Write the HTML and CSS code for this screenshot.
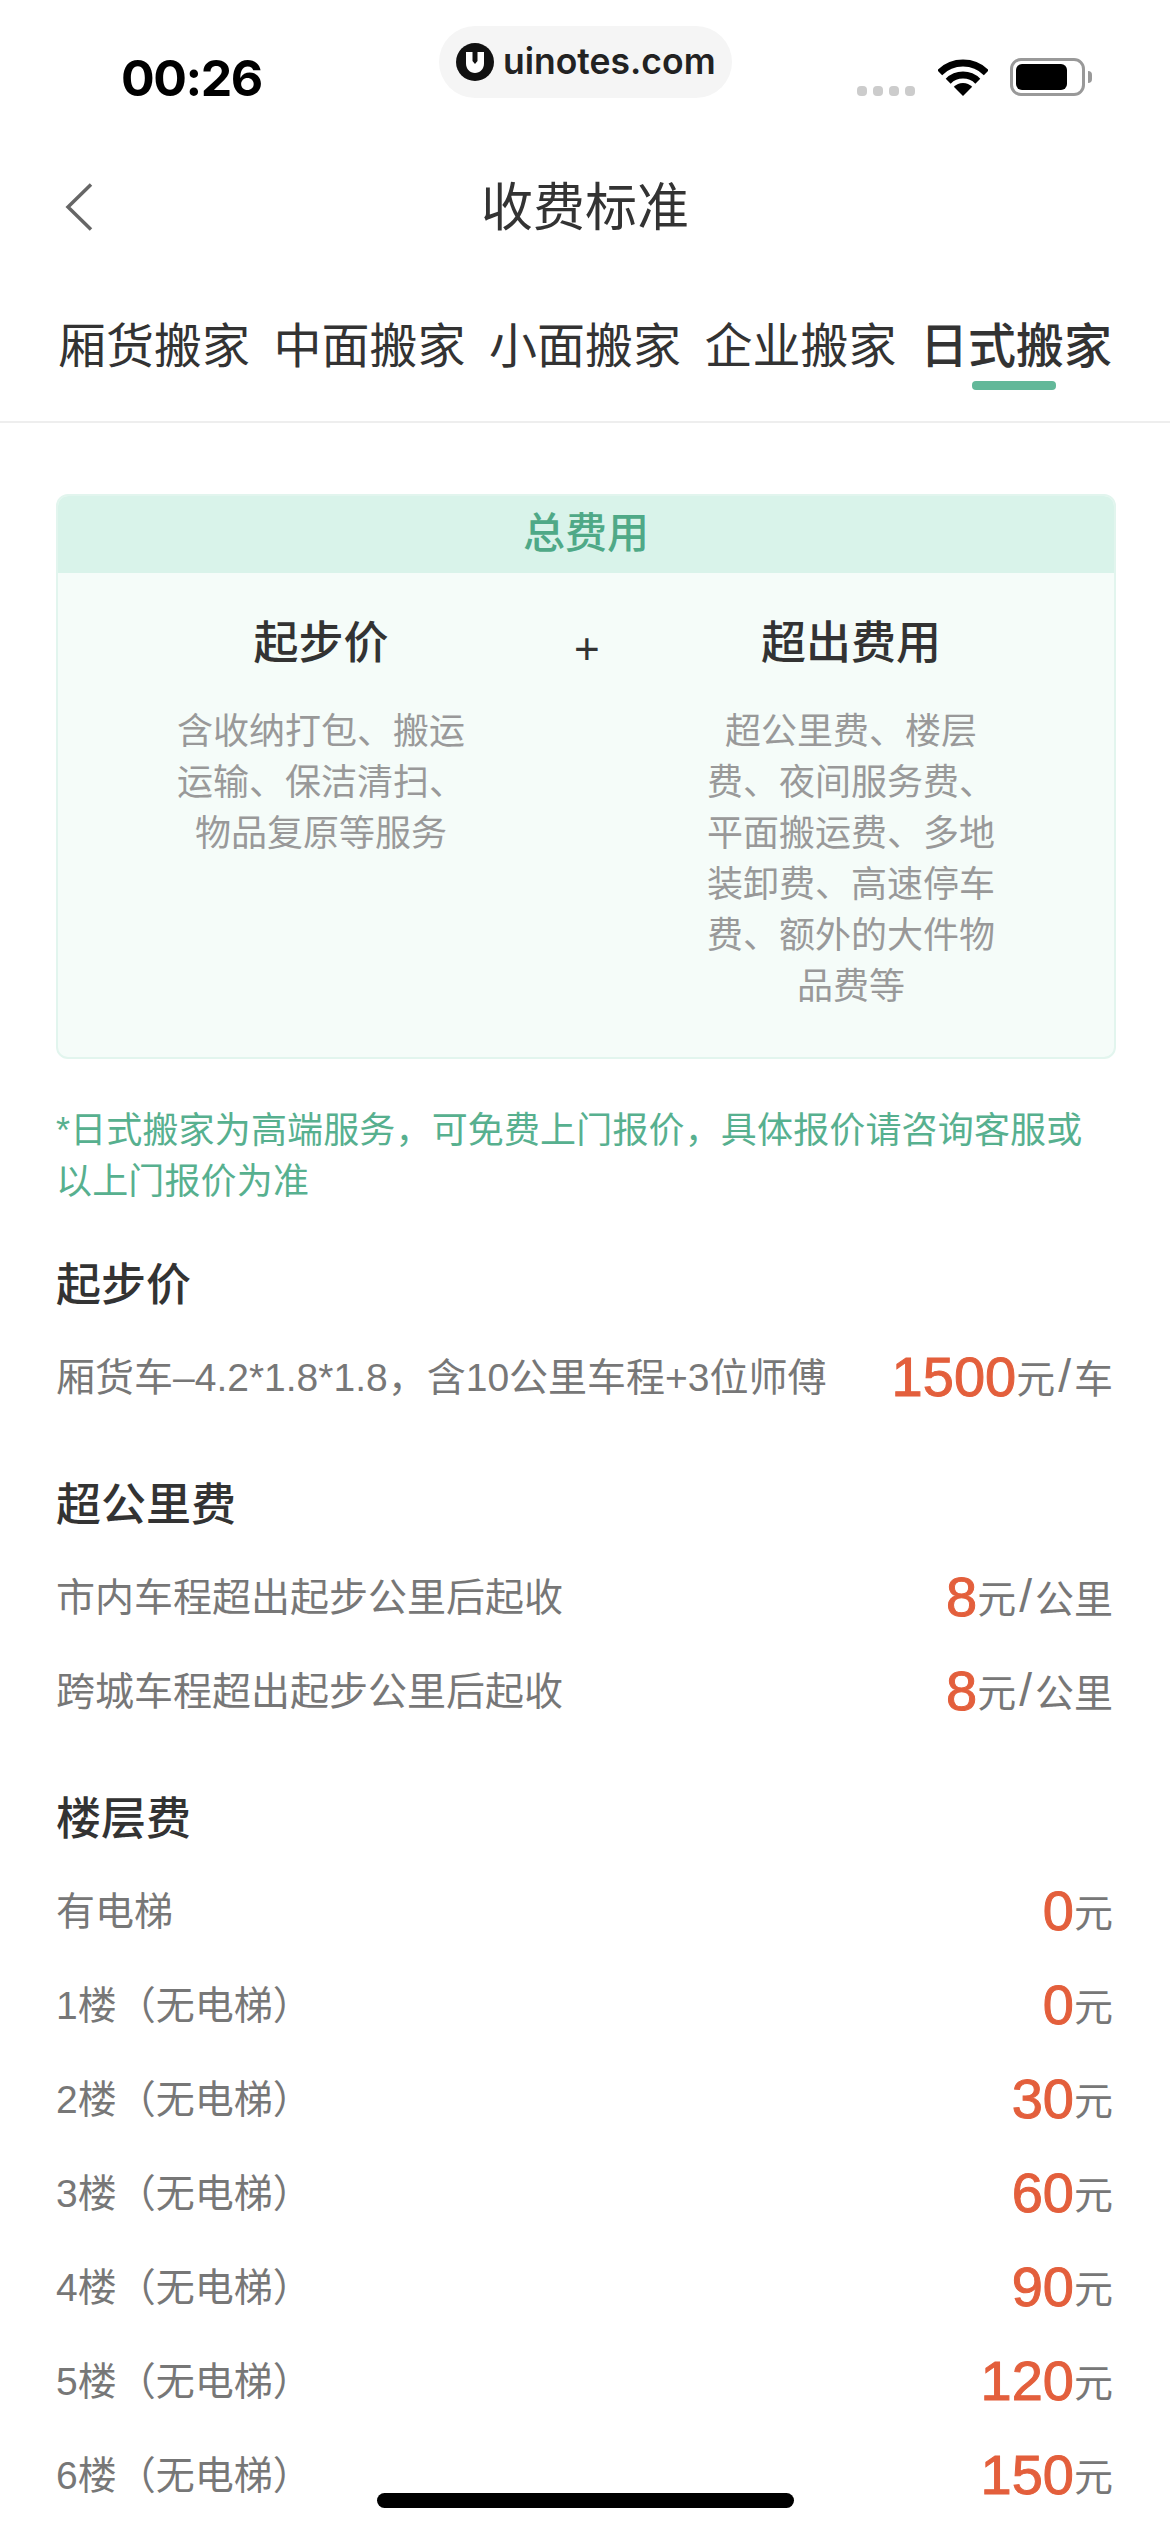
FILE: index.html
```html
<!DOCTYPE html>
<html lang="zh">
<head>
<meta charset="utf-8">
<title>收费标准</title>
<link rel="stylesheet" href="styles.css">
</head>
<body>
<div class="page">
  <header class="status">
    <span class="time">00:26</span>
    <div class="pill">
      <svg class="logo" viewBox="0 0 38 38"><circle cx="19" cy="19" r="19" fill="#111"/><path d="M10 9h6.500v9l2.500 3 2.500-3V9H28v11.500C28 26 24 30 19 30s-9-4-9-9.500z" fill="#fff"/></svg>
      <span class="brand">uinotes.com</span>
    </div>
    <div class="indicators">
      <div class="dots"><i></i><i></i><i></i><i></i></div>
      <svg class="wifi" viewBox="0 0 50 37"><path d="M1.700 13.700a33 33 0 0 1 46.600 0" fill="none" stroke="#000" stroke-width="7"/><path d="M10.200 22.200a21 21 0 0 1 29.600 0" fill="none" stroke="#000" stroke-width="7"/><path d="M15.800 27.800a13 13 0 0 1 18.400 0L25 37z" fill="#000"/></svg>
      <div class="battery"><div class="battery-body"><div class="battery-fill"></div></div><div class="battery-nub"></div></div>
    </div>
  </header>

  <nav class="titlebar">
    <svg class="back" viewBox="0 0 28 48"><path d="M26 1.500 3 24l23 22.500" fill="none" stroke="#666" stroke-width="3.500"/></svg>
    <h1 class="title">收费标准</h1>
  </nav>

  <div class="tabs">
    <span class="tab">厢货搬家</span>
    <span class="tab">中面搬家</span>
    <span class="tab">小面搬家</span>
    <span class="tab">企业搬家</span>
    <span class="tab active">日式搬家</span>
  </div>

  <main class="content">
    <section class="card">
      <div class="card-head">总费用</div>
      <div class="card-body">
        <div class="col">
          <h3 class="col-title">起步价</h3>
          <p class="col-desc">含收纳打包、搬运运输、保洁清扫、物品复原等服务</p>
        </div>
        <div class="plus">+</div>
        <div class="col">
          <h3 class="col-title">超出费用</h3>
          <p class="col-desc">超公里费、楼层费、夜间服务费、平面搬运费、多地装卸费、高速停车费、额外的大件物品费等</p>
        </div>
      </div>
    </section>

    <p class="notice">*日式搬家为高端服务，可免费上门报价，具体报价请咨询客服或以上门报价为准</p>

    <h2 class="sec">起步价</h2>
    <div class="row"><span class="label">厢货车–4.2*1.8*1.8，含10公里车程+3位师傅</span><span class="price"><b>1500</b>元<span class="slash">/</span>车</span></div>

    <h2 class="sec">超公里费</h2>
    <div class="row"><span class="label">市内车程超出起步公里后起收</span><span class="price"><b>8</b>元<span class="slash">/</span>公里</span></div>
    <div class="row"><span class="label">跨城车程超出起步公里后起收</span><span class="price"><b>8</b>元<span class="slash">/</span>公里</span></div>

    <h2 class="sec">楼层费</h2>
    <div class="row"><span class="label">有电梯</span><span class="price"><b>0</b>元</span></div>
    <div class="row"><span class="label">1楼（无电梯）</span><span class="price"><b>0</b>元</span></div>
    <div class="row"><span class="label">2楼（无电梯）</span><span class="price"><b>30</b>元</span></div>
    <div class="row"><span class="label">3楼（无电梯）</span><span class="price"><b>60</b>元</span></div>
    <div class="row"><span class="label">4楼（无电梯）</span><span class="price"><b>90</b>元</span></div>
    <div class="row"><span class="label">5楼（无电梯）</span><span class="price"><b>120</b>元</span></div>
    <div class="row"><span class="label">6楼（无电梯）</span><span class="price"><b>150</b>元</span></div>
  </main>

  <div class="home"></div>
</div>
</body>
</html>
```
FILE: styles.css
```css
* { box-sizing: border-box; }
html, body { margin: 0; padding: 0; background: #fff; }
body { font-family: "Liberation Sans", "Noto Sans CJK SC", sans-serif; color: #333; }
.page { position: relative; width: 1170px; height: 2532px; overflow: hidden; background: #fff; }
h1, h2, h3, p { margin: 0; font-weight: 400; }

.status { display: flex; align-items: flex-start; height: 130px; padding: 26px 0 0 121px; }
.time { font-family: Inter, sans-serif; font-weight: 700; font-size: 50px; letter-spacing: -1.500px; line-height: 50px; margin-top: 27px; width: 318px; color: #000; }
.pill { display: flex; align-items: center; width: 293px; height: 72px; padding-left: 17px; border-radius: 36px; background: #f5f5f5; }
.logo { width: 38px; height: 38px; margin-right: 9px; flex: none; }
.brand { font-family: Inter, sans-serif; font-weight: 600; font-size: 35.500px; color: #222; line-height: 40px; }
.indicators { display: flex; align-items: flex-start; margin-left: 125px; }
.dots { display: flex; gap: 6px; margin-top: 60px; }
.dots i { display: block; width: 10px; height: 10px; border-radius: 4px; background: #ccc; }
.wifi { width: 50px; height: 37px; margin: 33px 0 0 23px; }
.battery { display: flex; align-items: center; margin: 32px 0 0 22px; height: 38px; }
.battery-body { width: 75px; height: 38px; padding: 3px 15px 3px 3px; border: 3px solid #999; border-radius: 11px; }
.battery-fill { width: 100%; height: 100%; background: #000; border-radius: 6px; }
.battery-nub { width: 4px; height: 12px; margin-left: 3px; background: #999; border-radius: 0 6px 6px 0; }

.titlebar { position: relative; display: flex; justify-content: center; align-items: center; height: 154px; }
.back { position: absolute; left: 65px; top: 53px; width: 28px; height: 48px; }
.title { font-size: 52px; line-height: 60px; color: #333; margin-top: 2px; }

.tabs { display: flex; gap: 23.500px; height: 139px; padding: 33px 0 0 58px; border-bottom: 2px solid #eee; }
.tab { position: relative; font-size: 48px; line-height: 60px; color: #333; white-space: nowrap; }
.tab.active { font-weight: 500; }
.tab.active::after { content: ""; position: absolute; left: 52px; top: 64px; width: 84px; height: 9px; border-radius: 4px; background: #62b899; }

.content { padding: 71px 54px 0 56px; }
.card { width: 1060px; height: 565px; border: 2px solid #e2f5ee; border-radius: 12px; background: #f5fcf9; overflow: hidden; }
.card-head { height: 78px; margin: -1px -1px 0; background: #d9f3ea; color: #4fa987; font-size: 42px; font-weight: 500; line-height: 78px; text-align: center; }
.card-body { display: grid; grid-template-columns: 1fr 24px 1fr; padding: 41px 10px 0; }
.col { display: flex; flex-direction: column; align-items: center; }
.col-title { font-size: 45px; font-weight: 500; line-height: 60px; color: #333; }
.col-desc { width: 290px; margin-top: 32px; font-size: 36px; line-height: 51px; color: #999; text-align: center; }
.plus { font-size: 44px; line-height: 60px; text-align: center; margin-top: 5px; color: #333; }

.notice { margin-top: 46px; font-size: 36px; letter-spacing: 0.150px; line-height: 51px; color: #57b08f; width: 1040px; }
.sec { margin: 53px 0 13px; font-size: 45px; line-height: 60px; font-weight: 500; color: #333; }
.notice + .sec { margin-top: 49px; }
.row { display: flex; justify-content: space-between; align-items: center; height: 94px; padding-right: 3px; font-size: 39px; color: #777; white-space: nowrap; }
.label { margin-top: -5px; }
.price { display: flex; align-items: center; color: #777; }
.price b { font-size: 56px; font-weight: 400; -webkit-text-stroke: 1px #e35f3c; color: #e35f3c; line-height: 94px; margin-top: 2px; }
.slash { font-size: 46px; font-weight: 300; padding: 0 3px; }

.home { position: absolute; left: 377px; top: 2493px; width: 417px; height: 15px; border-radius: 7.500px; background: #000; }
```
